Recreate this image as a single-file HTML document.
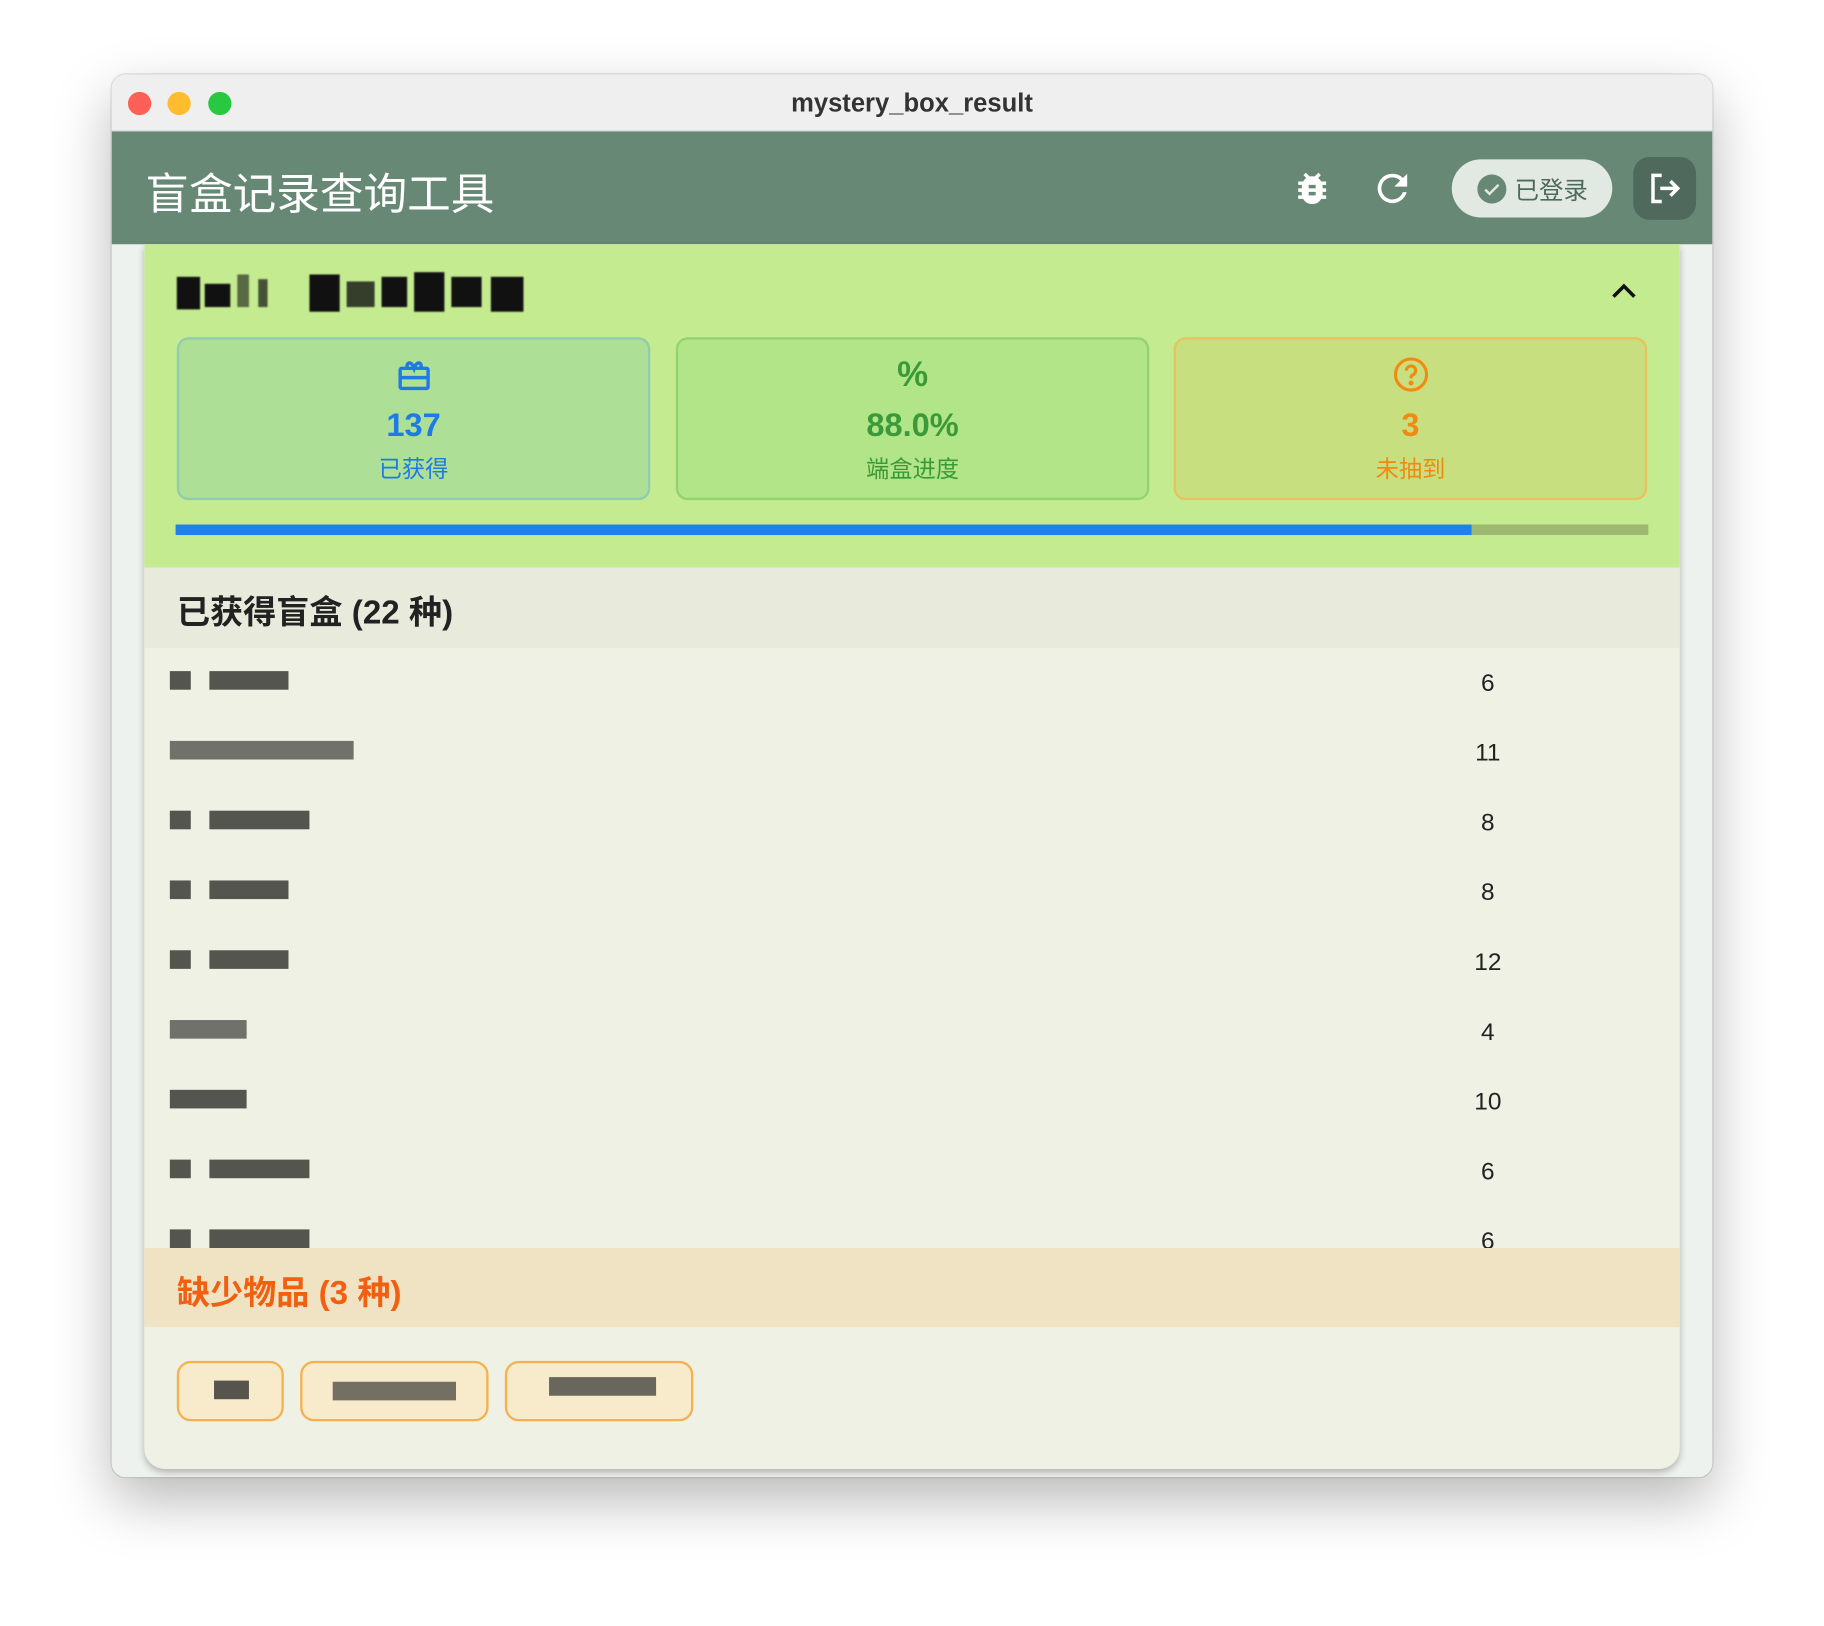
<!DOCTYPE html>
<html><head><meta charset="utf-8"><style>
*{box-sizing:border-box;margin:0;padding:0}
html,body{width:1824px;height:1626px;overflow:hidden;background:#fff}
#s{position:absolute;left:0;top:0;width:1568px;height:1398px;transform:scale(1.16327,1.1631);transform-origin:0 0;font-family:"Liberation Sans","Noto Sans CJK SC",sans-serif}
.a{position:absolute}
.win{left:96px;top:64px;width:1376px;height:1206px;border-radius:12px;background:#eef2ee;box-shadow:0 20px 50px rgba(0,0,0,.28),0 0 0 1px rgba(0,0,0,.12);overflow:hidden}
.tl{width:20px;height:20px;border-radius:50%;top:15px}
.card{left:28px;top:146px;width:1320px;height:1053px;background:#eff1e4;border-radius:0 0 18px 18px;box-shadow:0 3px 6px rgba(0,0,0,.25);overflow:hidden}
.stat{top:80px;width:407px;height:140px;border-radius:10px;border:2px solid;text-align:center}
.stat .n{position:absolute;left:0;right:0;top:58px;font-size:28px;font-weight:bold}
.stat .l{position:absolute;left:0;right:0;top:95px;font-size:20px}
.row{position:absolute;left:0;width:1320px;height:60px}
.row .num{position:absolute;left:1130px;width:50px;text-align:center;top:19px;font-size:21px;color:#222}
.blk{position:absolute;top:20px;height:16px;background:#3a3a36;opacity:.85}
.chip{position:absolute;top:960px;height:52px;border:2px solid #f5b14f;background:#f8ebcc;border-radius:12px}
.tb{position:absolute;background:#111}
</style></head><body><div id="s">
<div class="a win">
 <div class="a" style="left:0;top:0;width:1376px;height:49px;background:#efefef;border-bottom:1px solid #d8d8d8"></div>
 <div class="a tl" style="left:14px;background:#fe5f57"></div>
 <div class="a tl" style="left:48px;background:#febc2e"></div>
 <div class="a tl" style="left:83px;background:#28c840"></div>
 <div class="a" style="left:0;width:1376px;top:12px;text-align:center;font-size:22px;font-weight:bold;color:#333">mystery_box_result</div>
 <div class="a" style="left:0;top:49px;width:1376px;height:97px;background:#668875"></div>
 <div class="a" style="left:29px;top:72px;font-size:37.5px;color:#fff">盲盒记录查询工具</div>
 <svg class="a" style="left:1014px;top:79px" width="36" height="38" viewBox="0 0 24 24" fill="#fff"><path d="M20 8h-2.8a6 6 0 0 0-1.8-2l1.6-1.6-1.4-1.4-2.2 2.2a6 6 0 0 0-2.8 0L8.4 3 7 4.4 8.6 6a6 6 0 0 0-1.8 2H4v2h2.1a6 6 0 0 0 0 1V12H4v2h2v1a6 6 0 0 0 .1 1H4v2h2.8A6 6 0 0 0 17.2 18H20v-2h-2.1a6 6 0 0 0 .1-1v-1h2v-2h-2v-1a6 6 0 0 0-.1-1H20zm-6 8h-4v-2h4zm0-4h-4v-2h4z"/></svg>
 <svg class="a" style="left:1082px;top:79px" width="38" height="38" viewBox="0 0 24 24" fill="#fff"><path d="M17.65 6.35A7.96 7.96 0 0 0 12 4a8 8 0 1 0 7.73 10h-2.08A6 6 0 1 1 12 6c1.66 0 3.14.69 4.22 1.78L13 11h7V4z"/></svg>
 <div class="a" style="left:1152px;top:73px;width:138px;height:50px;border-radius:25px;background:#e2e9e3"></div>
 <svg class="a" style="left:1174px;top:86px" width="25" height="25" viewBox="0 0 24 24"><circle cx="12" cy="12" r="12" fill="#668875"/><path d="M6.5 12.5l3.5 3.5 7.5-7.5" stroke="#e2e9e3" stroke-width="2" fill="none"/></svg>
 <div class="a" style="left:1206px;top:84px;font-size:21px;color:#4e6a5c">已登录</div>
 <div class="a" style="left:1308px;top:71px;width:54px;height:54px;border-radius:14px;background:#4f6a5c"></div>
 <svg class="a" style="left:1320px;top:83px" width="30" height="30" viewBox="0 0 24 24" fill="none" stroke="#fff" stroke-width="2.4"><path d="M10 3H4v18h6M9 12h11M16 7l5 5-5 5"/></svg>

 <div class="a card">
  <div class="a" style="left:0;top:0;width:1320px;height:278px;background:#c4eb90"></div>
  <div class="a" style="left:28px;top:22px;width:300px;height:40px;filter:blur(.6px)">
   <div class="tb" style="left:0;top:6px;width:20px;height:28px"></div>
   <div class="tb" style="left:24px;top:12px;width:22px;height:20px"></div>
   <div class="tb" style="left:52px;top:4px;width:10px;height:28px;opacity:.6"></div>
   <div class="tb" style="left:70px;top:8px;width:8px;height:24px;opacity:.7"></div>
   <div class="tb" style="left:114px;top:4px;width:26px;height:32px"></div>
   <div class="tb" style="left:146px;top:10px;width:24px;height:22px;opacity:.8"></div>
   <div class="tb" style="left:176px;top:6px;width:22px;height:26px"></div>
   <div class="tb" style="left:204px;top:2px;width:26px;height:34px"></div>
   <div class="tb" style="left:236px;top:6px;width:26px;height:26px"></div>
   <div class="tb" style="left:270px;top:6px;width:28px;height:30px"></div>
  </div>
  <svg class="a" style="left:1260px;top:30px" width="24" height="20" viewBox="0 0 24 20" fill="none" stroke="#111" stroke-width="3"><path d="M3 15l9-9 9 9"/></svg>
  <div class="a stat" style="left:28px;background:#addf97;border-color:#8ecdb0;color:#1e7be6">
   <svg class="a" style="left:186px;top:14px" width="32" height="32" viewBox="0 0 24 24" fill="none" stroke="#1e7be6" stroke-width="2.2"><rect x="3" y="8" width="18" height="13" rx="1"/><path d="M3 14h18M8 8c-2-3 2-6 4 0 2-6 6-3 4 0"/></svg>
   <div class="n">137</div><div class="l">已获得</div></div>
  <div class="a stat" style="left:457px;background:#b2e587;border-color:#92d26f;color:#3a9a3a">
   <div class="a" style="left:0;right:0;top:14px;font-size:30px;font-weight:bold">%</div>
   <div class="n">88.0%</div><div class="l">端盒进度</div></div>
  <div class="a stat" style="left:885px;background:#c8df80;border-color:#e8c25c;color:#f08a10">
   <svg class="a" style="left:186px;top:14px" width="32" height="32" viewBox="0 0 24 24" fill="none" stroke="#f08a10" stroke-width="2"><circle cx="12" cy="12" r="10"/><path d="M9 9.5a3 3 0 1 1 4 2.8c-1 .4-1 1.2-1 2.2"/><circle cx="12" cy="17.5" r=".6" fill="#f08a10"/></svg>
   <div class="n">3</div><div class="l">未抽到</div></div>
  <div class="a" style="left:27px;top:241px;width:1266px;height:9px;background:#9db870"></div>
  <div class="a" style="left:27px;top:241px;width:1114px;height:9px;background:#1e80ea"></div>

  <div class="a" style="left:0;top:278px;width:1320px;height:69px;background:#e8ebdc"></div>
  <div class="a" style="left:28px;top:294px;font-size:28.5px;font-weight:bold;color:#222">已获得盲盒 (22 种)</div>

  <div class="row" style="top:347px"><div class="blk" style="left:22px;width:18px"></div><div class="blk" style="left:56px;width:68px"></div><div class="num">6</div></div>
  <div class="row" style="top:407px"><div class="blk" style="left:22px;width:158px;opacity:.7"></div><div class="num">11</div></div>
  <div class="row" style="top:467px"><div class="blk" style="left:22px;width:18px"></div><div class="blk" style="left:56px;width:86px"></div><div class="num">8</div></div>
  <div class="row" style="top:527px"><div class="blk" style="left:22px;width:18px"></div><div class="blk" style="left:56px;width:68px"></div><div class="num">8</div></div>
  <div class="row" style="top:587px"><div class="blk" style="left:22px;width:18px"></div><div class="blk" style="left:56px;width:68px"></div><div class="num">12</div></div>
  <div class="row" style="top:647px"><div class="blk" style="left:22px;width:66px;opacity:.7"></div><div class="num">4</div></div>
  <div class="row" style="top:707px"><div class="blk" style="left:22px;width:66px"></div><div class="num">10</div></div>
  <div class="row" style="top:767px"><div class="blk" style="left:22px;width:18px"></div><div class="blk" style="left:56px;width:86px"></div><div class="num">6</div></div>
  <div class="row" style="top:827px"><div class="blk" style="left:22px;width:18px"></div><div class="blk" style="left:56px;width:86px"></div><div class="num">6</div></div>

  <div class="a" style="left:0;top:863px;width:1320px;height:68px;background:#f0e3c4"></div>
  <div class="a" style="left:28px;top:879px;font-size:28.5px;font-weight:bold;color:#f06010">缺少物品 (3 种)</div>
  <div class="a" style="left:0;top:931px;width:1320px;height:122px;background:#eff1e4"></div>
  <div class="chip" style="left:28px;width:92px"><div class="blk" style="left:30px;top:15px;width:30px"></div></div>
  <div class="chip" style="left:134px;width:162px"><div class="blk" style="left:26px;top:16px;width:106px;opacity:.7"></div></div>
  <div class="chip" style="left:310px;width:162px"><div class="blk" style="left:36px;top:12px;width:92px;opacity:.75"></div></div>
 </div>
</div>
</div></body></html>
